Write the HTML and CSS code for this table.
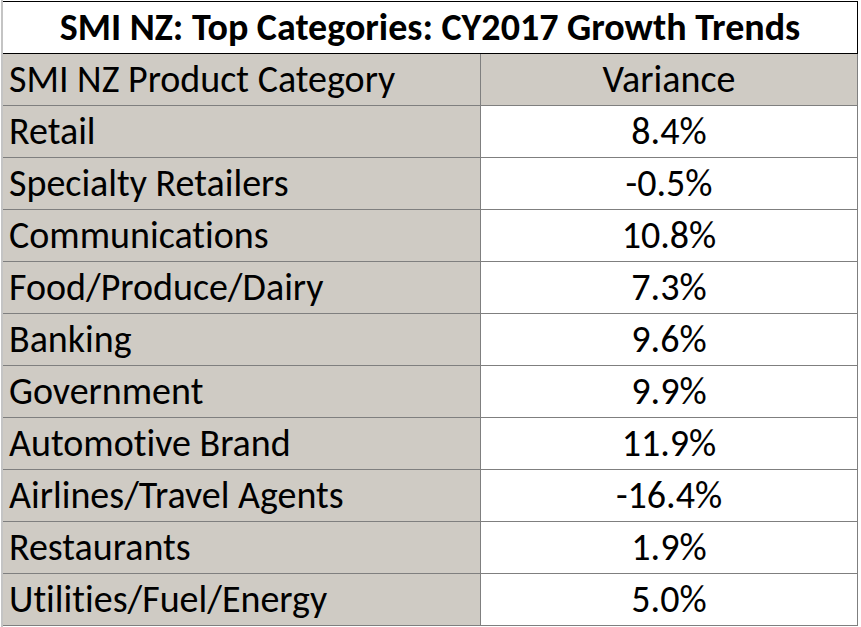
FILE: index.html
```html
<!DOCTYPE html>
<html>
<head>
<meta charset="utf-8">
<title>SMI NZ: Top Categories: CY2017 Growth Trends</title>
<link rel="stylesheet" href="styles.css">
</head>
<body>
<div class="sheet">
  <table class="trends">
    <colgroup><col class="col-cat"><col class="col-val"></colgroup>
    <thead>
      <tr><th class="title" colspan="2">SMI NZ: Top Categories: CY2017 Growth Trends</th></tr>
      <tr class="head"><th class="cat">SMI NZ Product Category</th><th class="val">Variance</th></tr>
    </thead>
    <tbody>
      <tr><td class="cat">Retail</td><td class="val">8.4%</td></tr>
      <tr><td class="cat">Specialty Retailers</td><td class="val">-0.5%</td></tr>
      <tr><td class="cat">Communications</td><td class="val">10.8%</td></tr>
      <tr><td class="cat">Food/Produce/Dairy</td><td class="val">7.3%</td></tr>
      <tr><td class="cat">Banking</td><td class="val">9.6%</td></tr>
      <tr><td class="cat">Government</td><td class="val">9.9%</td></tr>
      <tr><td class="cat">Automotive Brand</td><td class="val">11.9%</td></tr>
      <tr><td class="cat">Airlines/Travel Agents</td><td class="val">-16.4%</td></tr>
      <tr><td class="cat">Restaurants</td><td class="val">1.9%</td></tr>
      <tr><td class="cat">Utilities/Fuel/Energy</td><td class="val">5.0%</td></tr>
    </tbody>
  </table>
</div>
</body>
</html>
```
FILE: styles.css
```css
html, body {
  margin: 0;
  padding: 0;
  background: #ffffff;
}
body {
  font-family: Carlito, Lato, "Liberation Sans", sans-serif;
  font-variant-ligatures: none;
  color: #000;
}
.sheet {
  margin-left: 1px;
  border-left: 2px solid #c4c4c4;
  height: 627px;
  padding-top: 1px;
  box-sizing: border-box;
  overflow: hidden;
}
.trends {
  border-collapse: separate;
  border-spacing: 0;
  table-layout: fixed;
  width: 855px;
}
.col-cat {
  width: 478px;
}
.trends th, .trends td {
  padding: 0;
  height: 51px;
  font-weight: normal;
  font-size: 38px;
  border-bottom: 1px solid #7f7f7f;
  line-height: 50px;
  padding-bottom: 1px;
  box-sizing: border-box;
  white-space: nowrap;
}
.trends .title {
  font-weight: bold;
  height: 53px;
  text-align: center;
  border-top: 1px solid #000;
  border-right: 1px solid #000;
  border-bottom: 1px solid #000;
  background: #fff;
}
.trends .cat {
  height: 52px;
  text-align: left;
  padding-left: 6px;
  background: #cfcbc4;
  border-right: 1px solid #7f7f7f;
}
.trends .val {
  height: 52px;
  text-align: center;
  background: #fff;
  border-right: 1px solid #7f7f7f;
}
.trends .head .val {
  background: #cfcbc4;
}
```
